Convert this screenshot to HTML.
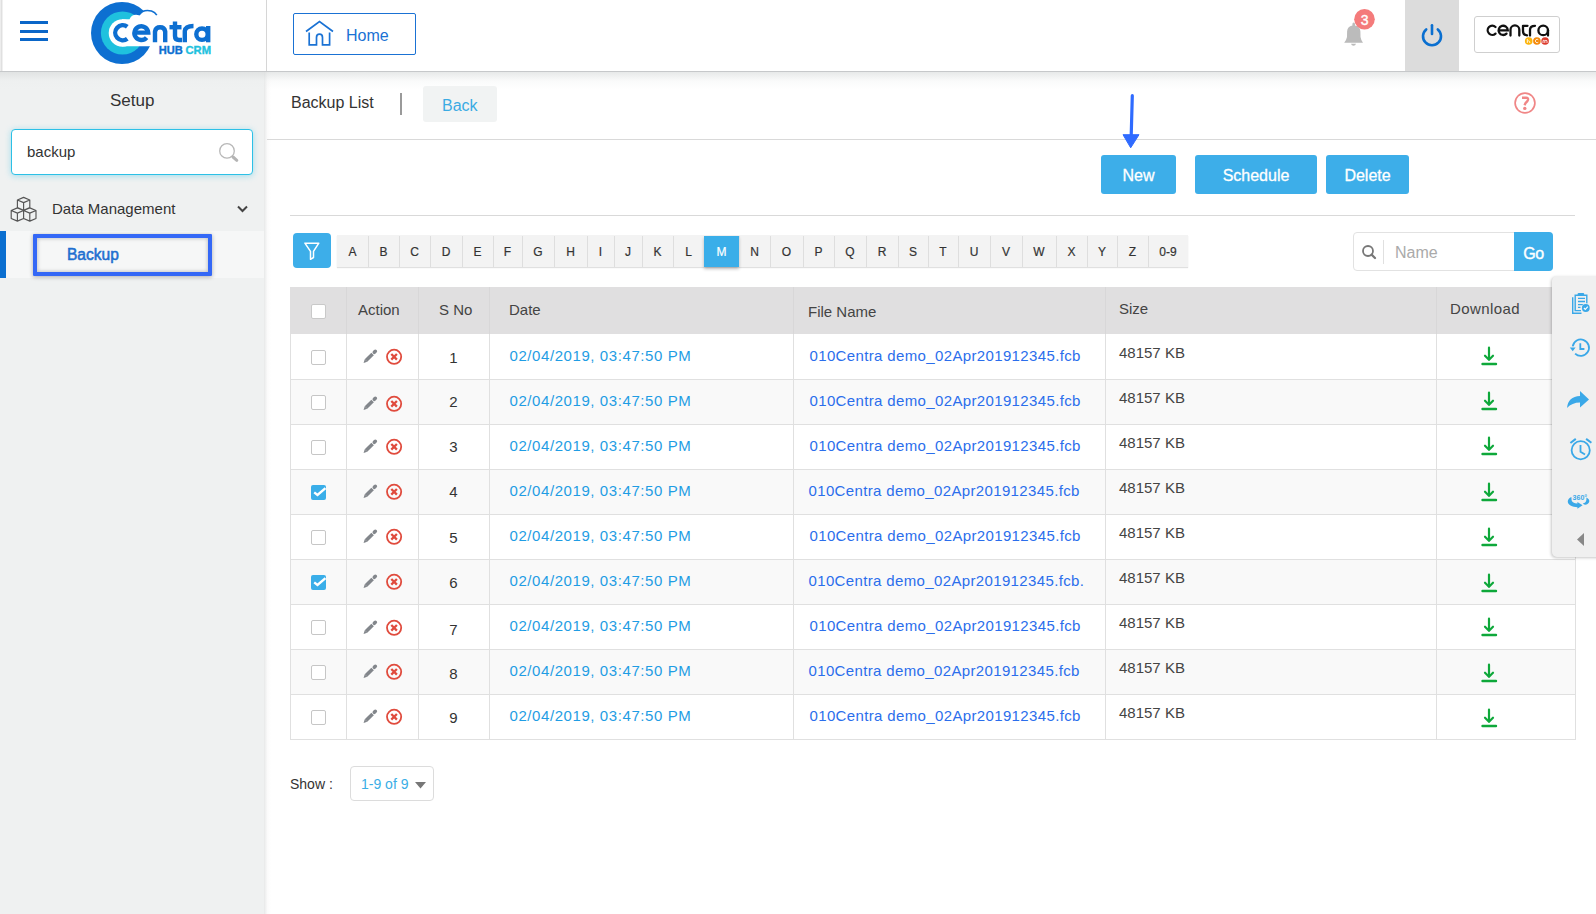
<!DOCTYPE html>
<html><head><meta charset="utf-8">
<style>
*{margin:0;padding:0;box-sizing:border-box}
html,body{width:1596px;height:914px;overflow:hidden;background:#fff;font-family:"Liberation Sans",sans-serif;color:#333}
.a{position:absolute}
.t{position:absolute;white-space:nowrap}
#hdr{position:absolute;left:0;top:0;width:1596px;height:72px;background:#fff;border-bottom:1px solid #c6c8ca}
#side{position:absolute;left:0;top:72px;width:265px;height:842px;background:#eff1f1}
</style></head>
<body>
<!-- sidebar -->
<div id="side"></div>
<div class="a" style="left:264px;top:72px;width:7px;height:842px;background:linear-gradient(to right,#e8e9e9,rgba(250,250,250,0.8) 50%,rgba(255,255,255,0))"></div>
<!-- header shadow -->
<div class="a" style="left:0;top:72px;width:1596px;height:18px;background:linear-gradient(to bottom,rgba(215,218,218,0.6),rgba(235,237,237,0.25) 50%,rgba(255,255,255,0))"></div>

<!-- header -->
<div id="hdr"></div>
<div class="a" style="left:0;top:0;width:3px;height:71px;background:linear-gradient(to right,#f4f4f4,#e0e0e0 50%,#f8f8f8)"></div>
<div class="a" style="left:266px;top:0;width:1px;height:71px;background:#d6d6d6"></div>
<!-- hamburger -->
<div class="a" style="left:20px;top:21px;width:28px;height:3px;background:#0a66c8"></div>
<div class="a" style="left:20px;top:29.5px;width:28px;height:3px;background:#0a66c8"></div>
<div class="a" style="left:20px;top:38px;width:28px;height:3px;background:#0a66c8"></div>

<!-- logo -->
<svg class="a" style="left:0;top:0" width="230" height="70" viewBox="0 0 230 70">
<circle cx="122" cy="33" r="31" fill="#0d6fd1"/>
<circle cx="122.5" cy="33" r="21.6" fill="#1fc1de"/>
<circle cx="122.5" cy="33" r="13.8" fill="#fff"/>
<path d="M122 19.3 L129.5 19.3 Q132 13.5 139 15.2 Q143 8.8 151.5 11 Q155 12 157 16 L225 16 L225 46.2 L158 46 Q153 46 149 46.2 L122 46.2 Z" fill="#fff"/>
<path d="M139 15.2 Q143 8.8 151.5 11 Q155 12.3 156.8 15.2" fill="none" stroke="#0d6fd1" stroke-width="1.6"/>
<g fill="none" stroke="#0d6fd1" stroke-width="4.4" stroke-linecap="butt">
<path d="M127.3 26.8 A7.5 7.5 0 1 0 127.3 38.7"/>
<path d="M134.6 32.6 L148.2 32.6 A6.9 6.9 0 1 0 146.6 37.6"/>
<path d="M155 42.3 L155 31.5 A5.2 5.2 0 0 1 165.2 31.5 L165.2 42.3"/>
<path d="M175 21.5 L175 36 Q175 40 179 40 L182 40"/>
<path d="M169.5 27.2 L181.5 27.2"/>
<path d="M184.8 42.3 L184.8 31 Q185.5 26 193.5 26"/>
<path d="M208.2 26 L208.2 42.3"/>
<circle cx="202" cy="34.2" r="5.7"/>
</g>
<text x="158.7" y="53.7" font-family="Liberation Sans" font-weight="bold" font-size="10.2" fill="#0d6fd1" stroke="#0d6fd1" stroke-width="0.35" textLength="24" lengthAdjust="spacingAndGlyphs">HUB</text>
<text x="185.5" y="53.7" font-family="Liberation Sans" font-weight="bold" font-size="10.2" fill="#1fc1de" stroke="#1fc1de" stroke-width="0.35" textLength="25.5" lengthAdjust="spacingAndGlyphs">CRM</text>
</svg>
<!-- home button -->
<div class="a" style="left:293px;top:13px;width:123px;height:42px;border:1.5px solid #1a72d4;border-radius:2px"></div>
<svg class="a" style="left:300px;top:15px" width="40" height="36" viewBox="300 15 40 36">
<path d="M306 31.5 L319.5 21.5 L333 31.5" fill="none" stroke="#1a72d4" stroke-width="1.7"/>
<path d="M309.2 32.5 L309.2 44.8 L316.5 44.8 L316.5 37.5 Q316.5 34.2 319.5 34.2 Q322.5 34.2 322.5 37.5 L322.5 44.8 L329.6 44.8 L329.6 32.5" fill="none" stroke="#1a72d4" stroke-width="1.7"/>
</svg>
<div class="t" style="left:346px;top:27px;font-size:16px;line-height:18px;color:#1a72d4">Home</div>
<!-- bell -->
<svg class="a" style="left:1340px;top:8px" width="40" height="42" viewBox="1340 8 40 42">
<path d="M1353.7 22.6 Q1355 22.6 1355 24.3 L1355 25.6 Q1360.2 26.8 1360.4 31.5 L1360.5 37 Q1361 40.2 1363 42.8 L1344.2 42.8 Q1346.4 40.2 1347 37 L1347.1 31.5 Q1347.3 26.8 1352.4 25.6 L1352.4 24.3 Q1352.4 22.6 1353.7 22.6 Z" fill="#bbbbbb"/>
<path d="M1351 43.8 L1356 43.8 Q1355.5 45.8 1353.5 45.8 Q1351.5 45.8 1351 43.8 Z" fill="#bbbbbb"/>
<circle cx="1364.5" cy="19.3" r="10.3" fill="#f47b7b"/>
</svg>
<div class="t" style="left:1354.7px;top:11.5px;width:20px;text-align:center;font-size:14px;line-height:16px;color:#fff;-webkit-text-stroke:0.4px #fff">3</div>
<!-- power -->
<div class="a" style="left:1405px;top:0;width:54px;height:71px;background:#dcdcdc"></div>
<svg class="a" style="left:1405px;top:0" width="54" height="71" viewBox="1405 0 54 71">
<path d="M1426.2 29.4 A9 9 0 1 0 1437.8 29.4" fill="none" stroke="#0a6fd0" stroke-width="2.6" stroke-linecap="round"/>
<path d="M1432 25.3 L1432 34" fill="none" stroke="#0a6fd0" stroke-width="2.6" stroke-linecap="round"/>
</svg>
<!-- centra box -->
<div class="a" style="left:1474px;top:16px;width:86px;height:37px;border:1px solid #cfcfcf;border-radius:3px;background:#fff"></div>
<svg class="a" style="left:1474px;top:16px" width="86" height="37" viewBox="1474 16 86 37">
<g fill="none" stroke="#111" stroke-width="2.3" stroke-linecap="round">
<path d="M1495.5 27 A4.6 4.6 0 1 0 1495.5 33.6"/>
<path d="M1498.8 30.3 L1507.8 30.3 A4.6 4.6 0 1 0 1506.5 33.6"/>
<path d="M1510.5 35.5 L1510.5 29.8 A4.4 4.4 0 0 1 1519.3 29.8 L1519.3 35.5"/>
<path d="M1523 25.8 L1523 31 Q1523 35 1527 35.3 M1523 25.8 L1527.5 25.8"/>
<path d="M1530 35.5 L1530 30 Q1530 25.8 1535 25.8"/>
<path d="M1548 30.5 L1548 35.5"/>
<circle cx="1543.2" cy="30.4" r="4.8"/>
</g>
<circle cx="1528.7" cy="41" r="3.8" fill="#fcb40a"/>
<circle cx="1536.9" cy="41" r="3.8" fill="#f58a0a"/>
<circle cx="1545.1" cy="41" r="3.8" fill="#dc3a2c"/>
<g fill="none" stroke="#fff" stroke-width="0.8">
<path d="M1527.3 39 L1527.3 43 M1527.3 41.3 Q1529.8 39.8 1529.8 43"/>
<path d="M1538.3 39.8 A1.7 1.7 0 1 0 1538.3 42.2"/>
<path d="M1543 43 L1543 40.5 Q1544.2 39.5 1544.8 41 L1544.8 43 M1544.8 41 Q1546 39.5 1547 40.8 L1547 43"/>
</g>
</svg>

<!-- sidebar content -->
<div class="t" style="left:110px;top:91px;font-size:17px;line-height:20px;color:#333">Setup</div>
<div class="a" style="left:11px;top:129px;width:242px;height:46px;border:1px solid #2cc0e6;border-radius:4px;background:#fff;box-shadow:0 1px 6px rgba(44,192,230,0.4)"></div>
<div class="t" style="left:27px;top:143px;font-size:15px;line-height:18px;color:#333">backup</div>
<svg class="a" style="left:215px;top:140px" width="26" height="26" viewBox="215 140 26 26">
<circle cx="227" cy="150.9" r="7.3" fill="none" stroke="#b8b8b8" stroke-width="1.3"/>
<path d="M233 157 L236.8 160.3" stroke="#b4b4b4" stroke-width="3" stroke-linecap="round"/>
</svg>
<!-- cubes icon -->
<svg class="a" style="left:5px;top:190px" width="40" height="38" viewBox="5 190 40 38"><path d="M23.60 197.40 L29.80 200.00 L29.80 207.60 L23.60 210.20 L17.40 207.60 L17.40 200.00 Z M17.40 200.00 L23.60 202.60 L29.80 200.00 M23.60 202.60 L23.60 210.20 M17.40 207.90 L23.60 210.50 L23.60 218.50 L17.40 221.10 L11.20 218.50 L11.20 210.50 Z M11.20 210.50 L17.40 213.10 L23.60 210.50 M17.40 213.10 L17.40 221.10 M29.80 207.90 L36.00 210.50 L36.00 218.50 L29.80 221.10 L23.60 218.50 L23.60 210.50 Z M23.60 210.50 L29.80 213.10 L36.00 210.50 M29.80 213.10 L29.80 221.10" fill="none" stroke="#555" stroke-width="1.15" stroke-linejoin="round"/></svg>
<div class="t" style="left:52px;top:200px;font-size:15px;line-height:18px;color:#333">Data Management</div>
<svg class="a" style="left:234px;top:202px" width="16" height="14" viewBox="234 202 16 14">
<path d="M238 206.5 L242.5 211 L247 206.5" fill="none" stroke="#444" stroke-width="2"/>
</svg>
<div class="a" style="left:0;top:231px;width:264px;height:47px;background:#f6f7f7"></div>
<div class="a" style="left:0;top:231px;width:6px;height:47px;background:#0b6fd0"></div>
<div class="a" style="left:33px;top:234px;width:179px;height:42px;border:4px solid #3468f6;border-radius:1px;box-shadow:0 1px 4px rgba(0,0,0,0.3), inset 0 0 4px rgba(0,0,0,0.28)"></div>
<div class="t" style="left:67px;top:245.5px;font-size:16px;line-height:18px;color:#1e6fd0;-webkit-text-stroke:0.55px #1e6fd0;transform:scaleX(0.97);transform-origin:0 0">Backup</div>

<!-- page title bar -->
<div class="t" style="left:291px;top:94px;font-size:16px;line-height:18px;color:#333">Backup List</div>
<div class="a" style="left:400px;top:93px;width:2px;height:22px;background:#9a9a9a"></div>
<div class="a" style="left:423px;top:86px;width:74px;height:36px;background:#f1f3f3;border-radius:3px"></div>
<div class="t" style="left:442px;top:97px;font-size:16px;line-height:18px;color:#3aabe3">Back</div>
<svg class="a" style="left:1510px;top:88px" width="30" height="30" viewBox="1510 88 30 30">
<circle cx="1525" cy="103" r="9.9" fill="none" stroke="#f08686" stroke-width="1.7"/>
<path d="M1522 97.7 H1526.2 Q1528.4 97.7 1528 99.7 Q1527.6 101.4 1525.6 103 L1524.5 105.2" fill="none" stroke="#f08686" stroke-width="2.4"/>
<circle cx="1524.8" cy="108.4" r="1.7" fill="#f08686"/>
</svg>
<div class="a" style="left:267px;top:139px;width:1329px;height:1px;background:#d9d9d9"></div>
<!-- arrow -->
<svg class="a" style="left:1115px;top:90px" width="30" height="62" viewBox="1115 90 30 62">
<path d="M1132.3 95.7 L1131.2 136" stroke="#2f6bff" stroke-width="3.2" stroke-linecap="round"/>
<path d="M1123 134.7 L1139 134.7 L1130.7 147.8 Z" fill="#2f6bff" stroke="#2f6bff" stroke-width="1" stroke-linejoin="round"/>
</svg>
<!-- action buttons -->
<div class="a" style="left:1101px;top:155px;width:75px;height:39px;background:#3daee9;border-radius:3px"></div>
<div class="t" style="left:1101px;top:167px;width:75px;text-align:center;font-size:16px;line-height:18px;color:#fff;-webkit-text-stroke:0.3px #fff">New</div>
<div class="a" style="left:1195px;top:155px;width:122px;height:39px;background:#3daee9;border-radius:3px"></div>
<div class="t" style="left:1195px;top:167px;width:122px;text-align:center;font-size:16px;line-height:18px;color:#fff;-webkit-text-stroke:0.3px #fff">Schedule</div>
<div class="a" style="left:1326px;top:155px;width:83px;height:39px;background:#3daee9;border-radius:3px"></div>
<div class="t" style="left:1326px;top:167px;width:83px;text-align:center;font-size:16px;line-height:18px;color:#fff;-webkit-text-stroke:0.3px #fff">Delete</div>
<div class="a" style="left:290px;top:215px;width:1285px;height:1px;background:#d9d9d9"></div>
<!-- filter -->
<div class="a" style="left:293px;top:233px;width:38px;height:35px;background:#3daee9;border-radius:4px"></div>
<svg class="a" style="left:300px;top:238px" width="24" height="26" viewBox="300 238 24 26"><path d="M304.9 243.2 L318.8 243.2 L313.5 251.4 L313.5 257.5 L310.5 259.3 L310.5 251.4 Z" fill="none" stroke="#fff" stroke-width="1.5" stroke-linejoin="round"/></svg>
<div class="a" style="left:337px;top:235px;width:851px;height:32px;background:#f3f3f3;box-shadow:0 1px 1px rgba(0,0,0,0.12)"></div>
<div class="t" style="left:337px;top:244.5px;width:31px;text-align:center;font-size:12px;line-height:14px;color:#333;-webkit-text-stroke:0.2px #333">A</div>
<div class="a" style="left:368px;top:236px;width:1px;height:31px;background:#dedede"></div>
<div class="t" style="left:368px;top:244.5px;width:31px;text-align:center;font-size:12px;line-height:14px;color:#333;-webkit-text-stroke:0.2px #333">B</div>
<div class="a" style="left:399px;top:236px;width:1px;height:31px;background:#dedede"></div>
<div class="t" style="left:399px;top:244.5px;width:31px;text-align:center;font-size:12px;line-height:14px;color:#333;-webkit-text-stroke:0.2px #333">C</div>
<div class="a" style="left:430px;top:236px;width:1px;height:31px;background:#dedede"></div>
<div class="t" style="left:430px;top:244.5px;width:32px;text-align:center;font-size:12px;line-height:14px;color:#333;-webkit-text-stroke:0.2px #333">D</div>
<div class="a" style="left:462px;top:236px;width:1px;height:31px;background:#dedede"></div>
<div class="t" style="left:462px;top:244.5px;width:31px;text-align:center;font-size:12px;line-height:14px;color:#333;-webkit-text-stroke:0.2px #333">E</div>
<div class="a" style="left:493px;top:236px;width:1px;height:31px;background:#dedede"></div>
<div class="t" style="left:493px;top:244.5px;width:29px;text-align:center;font-size:12px;line-height:14px;color:#333;-webkit-text-stroke:0.2px #333">F</div>
<div class="a" style="left:522px;top:236px;width:1px;height:31px;background:#dedede"></div>
<div class="t" style="left:522px;top:244.5px;width:32px;text-align:center;font-size:12px;line-height:14px;color:#333;-webkit-text-stroke:0.2px #333">G</div>
<div class="a" style="left:554px;top:236px;width:1px;height:31px;background:#dedede"></div>
<div class="t" style="left:554px;top:244.5px;width:33px;text-align:center;font-size:12px;line-height:14px;color:#333;-webkit-text-stroke:0.2px #333">H</div>
<div class="a" style="left:587px;top:236px;width:1px;height:31px;background:#dedede"></div>
<div class="t" style="left:587px;top:244.5px;width:27px;text-align:center;font-size:12px;line-height:14px;color:#333;-webkit-text-stroke:0.2px #333">I</div>
<div class="a" style="left:614px;top:236px;width:1px;height:31px;background:#dedede"></div>
<div class="t" style="left:614px;top:244.5px;width:28px;text-align:center;font-size:12px;line-height:14px;color:#333;-webkit-text-stroke:0.2px #333">J</div>
<div class="a" style="left:642px;top:236px;width:1px;height:31px;background:#dedede"></div>
<div class="t" style="left:642px;top:244.5px;width:31px;text-align:center;font-size:12px;line-height:14px;color:#333;-webkit-text-stroke:0.2px #333">K</div>
<div class="a" style="left:673px;top:236px;width:1px;height:31px;background:#dedede"></div>
<div class="t" style="left:673px;top:244.5px;width:31px;text-align:center;font-size:12px;line-height:14px;color:#333;-webkit-text-stroke:0.2px #333">L</div>
<div class="a" style="left:704px;top:236px;width:35px;height:31px;background:#3aaee9;box-shadow:0 2px 3px rgba(0,0,0,0.25)"></div>
<div class="t" style="left:704px;top:244.5px;width:35px;text-align:center;font-size:12px;line-height:14px;color:#fff;-webkit-text-stroke:0.2px #fff">M</div>
<div class="a" style="left:739px;top:236px;width:1px;height:31px;background:#dedede"></div>
<div class="t" style="left:739px;top:244.5px;width:31px;text-align:center;font-size:12px;line-height:14px;color:#333;-webkit-text-stroke:0.2px #333">N</div>
<div class="a" style="left:770px;top:236px;width:1px;height:31px;background:#dedede"></div>
<div class="t" style="left:770px;top:244.5px;width:33px;text-align:center;font-size:12px;line-height:14px;color:#333;-webkit-text-stroke:0.2px #333">O</div>
<div class="a" style="left:803px;top:236px;width:1px;height:31px;background:#dedede"></div>
<div class="t" style="left:803px;top:244.5px;width:31px;text-align:center;font-size:12px;line-height:14px;color:#333;-webkit-text-stroke:0.2px #333">P</div>
<div class="a" style="left:834px;top:236px;width:1px;height:31px;background:#dedede"></div>
<div class="t" style="left:834px;top:244.5px;width:32px;text-align:center;font-size:12px;line-height:14px;color:#333;-webkit-text-stroke:0.2px #333">Q</div>
<div class="a" style="left:866px;top:236px;width:1px;height:31px;background:#dedede"></div>
<div class="t" style="left:866px;top:244.5px;width:32px;text-align:center;font-size:12px;line-height:14px;color:#333;-webkit-text-stroke:0.2px #333">R</div>
<div class="a" style="left:898px;top:236px;width:1px;height:31px;background:#dedede"></div>
<div class="t" style="left:898px;top:244.5px;width:30px;text-align:center;font-size:12px;line-height:14px;color:#333;-webkit-text-stroke:0.2px #333">S</div>
<div class="a" style="left:928px;top:236px;width:1px;height:31px;background:#dedede"></div>
<div class="t" style="left:928px;top:244.5px;width:30px;text-align:center;font-size:12px;line-height:14px;color:#333;-webkit-text-stroke:0.2px #333">T</div>
<div class="a" style="left:958px;top:236px;width:1px;height:31px;background:#dedede"></div>
<div class="t" style="left:958px;top:244.5px;width:32px;text-align:center;font-size:12px;line-height:14px;color:#333;-webkit-text-stroke:0.2px #333">U</div>
<div class="a" style="left:990px;top:236px;width:1px;height:31px;background:#dedede"></div>
<div class="t" style="left:990px;top:244.5px;width:32px;text-align:center;font-size:12px;line-height:14px;color:#333;-webkit-text-stroke:0.2px #333">V</div>
<div class="a" style="left:1022px;top:236px;width:1px;height:31px;background:#dedede"></div>
<div class="t" style="left:1022px;top:244.5px;width:34px;text-align:center;font-size:12px;line-height:14px;color:#333;-webkit-text-stroke:0.2px #333">W</div>
<div class="a" style="left:1056px;top:236px;width:1px;height:31px;background:#dedede"></div>
<div class="t" style="left:1056px;top:244.5px;width:31px;text-align:center;font-size:12px;line-height:14px;color:#333;-webkit-text-stroke:0.2px #333">X</div>
<div class="a" style="left:1087px;top:236px;width:1px;height:31px;background:#dedede"></div>
<div class="t" style="left:1087px;top:244.5px;width:30px;text-align:center;font-size:12px;line-height:14px;color:#333;-webkit-text-stroke:0.2px #333">Y</div>
<div class="a" style="left:1117px;top:236px;width:1px;height:31px;background:#dedede"></div>
<div class="t" style="left:1117px;top:244.5px;width:31px;text-align:center;font-size:12px;line-height:14px;color:#333;-webkit-text-stroke:0.2px #333">Z</div>
<div class="a" style="left:1148px;top:236px;width:1px;height:31px;background:#dedede"></div>
<div class="t" style="left:1148px;top:244.5px;width:40px;text-align:center;font-size:12px;line-height:14px;color:#333;-webkit-text-stroke:0.2px #333">0-9</div>
<!-- name search -->
<div class="a" style="left:1353px;top:232px;width:200px;height:39px;border:1px solid #e2e2e2;border-radius:4px;background:#fff"></div>
<svg class="a" style="left:1360px;top:243px" width="18" height="18" viewBox="1360 243 18 18"><circle cx="1368" cy="251" r="5" fill="none" stroke="#777" stroke-width="1.8"/><path d="M1371.6 254.6 L1375 258" stroke="#777" stroke-width="2.2" stroke-linecap="round"/></svg>
<div class="a" style="left:1383px;top:240px;width:1px;height:24px;background:#e0e0e0"></div>
<div class="t" style="left:1395px;top:244px;font-size:16px;line-height:18px;color:#aaa">Name</div>
<div class="a" style="left:1514px;top:232px;width:39px;height:39px;background:#3daee9;border-radius:0 4px 4px 0"></div>
<div class="t" style="left:1514px;top:244.5px;width:39px;text-align:center;font-size:16px;line-height:18px;color:#fff;-webkit-text-stroke:0.4px #fff;letter-spacing:-0.5px">Go</div>
<!-- table -->
<div class="a" style="left:290px;top:287px;width:1286px;height:47px;background:#e0dfe0"></div>
<div class="a" style="left:346px;top:287px;width:1px;height:47px;background:#d8d7d8"></div>
<div class="a" style="left:418px;top:287px;width:1px;height:47px;background:#d8d7d8"></div>
<div class="a" style="left:489px;top:287px;width:1px;height:47px;background:#d8d7d8"></div>
<div class="a" style="left:793px;top:287px;width:1px;height:47px;background:#d8d7d8"></div>
<div class="a" style="left:1105px;top:287px;width:1px;height:47px;background:#d8d7d8"></div>
<div class="a" style="left:1436px;top:287px;width:1px;height:47px;background:#d8d7d8"></div>
<div class="a" style="left:290px;top:334px;width:1286px;height:45px;background:#ffffff"></div>
<div class="a" style="left:290px;top:379px;width:1286px;height:45px;background:#f9f9f9"></div>
<div class="a" style="left:290px;top:424px;width:1286px;height:45px;background:#ffffff"></div>
<div class="a" style="left:290px;top:469px;width:1286px;height:45px;background:#f9f9f9"></div>
<div class="a" style="left:290px;top:514px;width:1286px;height:45px;background:#ffffff"></div>
<div class="a" style="left:290px;top:559px;width:1286px;height:45px;background:#f9f9f9"></div>
<div class="a" style="left:290px;top:604px;width:1286px;height:45px;background:#ffffff"></div>
<div class="a" style="left:290px;top:649px;width:1286px;height:45px;background:#f9f9f9"></div>
<div class="a" style="left:290px;top:694px;width:1286px;height:45px;background:#ffffff"></div>
<div class="a" style="left:290px;top:334px;width:1px;height:406px;background:#e0e0e0"></div>
<div class="a" style="left:1575px;top:334px;width:1px;height:406px;background:#e0e0e0"></div>
<div class="a" style="left:346px;top:334px;width:1px;height:406px;background:#e0e0e0"></div>
<div class="a" style="left:418px;top:334px;width:1px;height:406px;background:#e0e0e0"></div>
<div class="a" style="left:489px;top:334px;width:1px;height:406px;background:#e0e0e0"></div>
<div class="a" style="left:793px;top:334px;width:1px;height:406px;background:#e0e0e0"></div>
<div class="a" style="left:1105px;top:334px;width:1px;height:406px;background:#e0e0e0"></div>
<div class="a" style="left:1436px;top:334px;width:1px;height:406px;background:#e0e0e0"></div>
<div class="a" style="left:290px;top:379px;width:1286px;height:1px;background:#e0e0e0"></div>
<div class="a" style="left:290px;top:424px;width:1286px;height:1px;background:#e0e0e0"></div>
<div class="a" style="left:290px;top:469px;width:1286px;height:1px;background:#e0e0e0"></div>
<div class="a" style="left:290px;top:514px;width:1286px;height:1px;background:#e0e0e0"></div>
<div class="a" style="left:290px;top:559px;width:1286px;height:1px;background:#e0e0e0"></div>
<div class="a" style="left:290px;top:604px;width:1286px;height:1px;background:#e0e0e0"></div>
<div class="a" style="left:290px;top:649px;width:1286px;height:1px;background:#e0e0e0"></div>
<div class="a" style="left:290px;top:694px;width:1286px;height:1px;background:#e0e0e0"></div>
<div class="a" style="left:290px;top:739px;width:1286px;height:1px;background:#e0e0e0"></div>
<div class="a" style="left:311px;top:304px;width:15px;height:15px;background:#fff;border:1px solid #c9c9c9;border-radius:2px"></div>
<div class="t" style="left:358px;top:301px;font-size:15px;line-height:17px;color:#444">Action</div>
<div class="t" style="left:439px;top:301px;font-size:15px;line-height:17px;color:#444">S No</div>
<div class="t" style="left:509px;top:301px;font-size:15px;line-height:17px;color:#444">Date</div>
<div class="t" style="left:808px;top:303px;font-size:15px;line-height:17px;color:#444">File Name</div>
<div class="t" style="left:1119px;top:300px;font-size:15px;line-height:17px;color:#444">Size</div>
<div class="t" style="left:1450px;top:300px;font-size:15px;line-height:17px;color:#444;letter-spacing:0.4px">Download</div>
<div class="a" style="left:311px;top:350px;width:15px;height:15px;background:#fff;border:1px solid #c6c6c6;border-radius:2px"></div>
<svg class="a" style="left:360px;top:346px" width="44" height="22" viewBox="360 0 44 22">
<path d="M366 14.6 L372.6 8" stroke="#82868b" stroke-width="3.6"/>
<path d="M374.3 6.3 L375.3 5.3" stroke="#82868b" stroke-width="3.6" stroke-linecap="round"/>
<path d="M364.73 13.33 L367.27 15.87 L363.6 17 Z" fill="#82868b"/>
<circle cx="394.1" cy="10.8" r="7.1" fill="none" stroke="#e04b3d" stroke-width="1.8"/>
<path d="M391.3 8 L396.9 13.6 M396.9 8 L391.3 13.6" stroke="#e04b3d" stroke-width="2.3"/>
</svg>
<div class="t" style="left:418px;top:349px;width:71px;text-align:center;font-size:15px;line-height:17px;color:#333">1</div>
<div class="t" style="left:509.5px;top:347px;font-size:15px;line-height:17px;letter-spacing:0.58px;color:#1f9de4">02/04/2019, 03:47:50 PM</div>
<div class="t" style="left:809.5px;top:347px;font-size:15px;line-height:17px;letter-spacing:0.36px;color:#2b6eec">010Centra demo_02Apr201912345.fcb</div>
<div class="t" style="left:1119px;top:344px;font-size:15px;line-height:17px;color:#444">48157 KB</div>
<svg class="a" style="left:1478px;top:343px" width="22" height="26" viewBox="1478 0 22 26">
<path d="M1489 4.7 L1489 16.5" stroke="#0ea83a" stroke-width="2.2" stroke-linecap="round"/>
<path d="M1485 12.7 L1489 16.7 L1493 12.7" fill="none" stroke="#0ea83a" stroke-width="2.2" stroke-linecap="round" stroke-linejoin="round"/>
<path d="M1482.5 21 L1496 21" stroke="#0ea83a" stroke-width="2.4" stroke-linecap="round"/>
</svg>
<div class="a" style="left:311px;top:395px;width:15px;height:15px;background:#fff;border:1px solid #c6c6c6;border-radius:2px"></div>
<svg class="a" style="left:360px;top:393px" width="44" height="22" viewBox="360 0 44 22">
<path d="M366 14.6 L372.6 8" stroke="#82868b" stroke-width="3.6"/>
<path d="M374.3 6.3 L375.3 5.3" stroke="#82868b" stroke-width="3.6" stroke-linecap="round"/>
<path d="M364.73 13.33 L367.27 15.87 L363.6 17 Z" fill="#82868b"/>
<circle cx="394.1" cy="10.8" r="7.1" fill="none" stroke="#e04b3d" stroke-width="1.8"/>
<path d="M391.3 8 L396.9 13.6 M396.9 8 L391.3 13.6" stroke="#e04b3d" stroke-width="2.3"/>
</svg>
<div class="t" style="left:418px;top:392.5px;width:71px;text-align:center;font-size:15px;line-height:17px;color:#333">2</div>
<div class="t" style="left:509.5px;top:392px;font-size:15px;line-height:17px;letter-spacing:0.58px;color:#1f9de4">02/04/2019, 03:47:50 PM</div>
<div class="t" style="left:809.5px;top:392px;font-size:15px;line-height:17px;letter-spacing:0.36px;color:#2b6eec">010Centra demo_02Apr201912345.fcb</div>
<div class="t" style="left:1119px;top:389px;font-size:15px;line-height:17px;color:#444">48157 KB</div>
<svg class="a" style="left:1478px;top:388px" width="22" height="26" viewBox="1478 0 22 26">
<path d="M1489 4.7 L1489 16.5" stroke="#0ea83a" stroke-width="2.2" stroke-linecap="round"/>
<path d="M1485 12.7 L1489 16.7 L1493 12.7" fill="none" stroke="#0ea83a" stroke-width="2.2" stroke-linecap="round" stroke-linejoin="round"/>
<path d="M1482.5 21 L1496 21" stroke="#0ea83a" stroke-width="2.4" stroke-linecap="round"/>
</svg>
<div class="a" style="left:311px;top:440px;width:15px;height:15px;background:#fff;border:1px solid #c6c6c6;border-radius:2px"></div>
<svg class="a" style="left:360px;top:436px" width="44" height="22" viewBox="360 0 44 22">
<path d="M366 14.6 L372.6 8" stroke="#82868b" stroke-width="3.6"/>
<path d="M374.3 6.3 L375.3 5.3" stroke="#82868b" stroke-width="3.6" stroke-linecap="round"/>
<path d="M364.73 13.33 L367.27 15.87 L363.6 17 Z" fill="#82868b"/>
<circle cx="394.1" cy="10.8" r="7.1" fill="none" stroke="#e04b3d" stroke-width="1.8"/>
<path d="M391.3 8 L396.9 13.6 M396.9 8 L391.3 13.6" stroke="#e04b3d" stroke-width="2.3"/>
</svg>
<div class="t" style="left:418px;top:438px;width:71px;text-align:center;font-size:15px;line-height:17px;color:#333">3</div>
<div class="t" style="left:509.5px;top:437px;font-size:15px;line-height:17px;letter-spacing:0.58px;color:#1f9de4">02/04/2019, 03:47:50 PM</div>
<div class="t" style="left:809.5px;top:437px;font-size:15px;line-height:17px;letter-spacing:0.36px;color:#2b6eec">010Centra demo_02Apr201912345.fcb</div>
<div class="t" style="left:1119px;top:434px;font-size:15px;line-height:17px;color:#444">48157 KB</div>
<svg class="a" style="left:1478px;top:433px" width="22" height="26" viewBox="1478 0 22 26">
<path d="M1489 4.7 L1489 16.5" stroke="#0ea83a" stroke-width="2.2" stroke-linecap="round"/>
<path d="M1485 12.7 L1489 16.7 L1493 12.7" fill="none" stroke="#0ea83a" stroke-width="2.2" stroke-linecap="round" stroke-linejoin="round"/>
<path d="M1482.5 21 L1496 21" stroke="#0ea83a" stroke-width="2.4" stroke-linecap="round"/>
</svg>
<div class="a" style="left:311px;top:485px;width:15px;height:15px;background:#3aaee9;border-radius:2px"></div>
<svg class="a" style="left:311px;top:485px" width="15" height="15" viewBox="0 0 15 15"><path d="M3.2 7.4 L6.5 10 L14.5 3.2" fill="none" stroke="#fff" stroke-width="2.4"/></svg>
<svg class="a" style="left:360px;top:481px" width="44" height="22" viewBox="360 0 44 22">
<path d="M366 14.6 L372.6 8" stroke="#82868b" stroke-width="3.6"/>
<path d="M374.3 6.3 L375.3 5.3" stroke="#82868b" stroke-width="3.6" stroke-linecap="round"/>
<path d="M364.73 13.33 L367.27 15.87 L363.6 17 Z" fill="#82868b"/>
<circle cx="394.1" cy="10.8" r="7.1" fill="none" stroke="#e04b3d" stroke-width="1.8"/>
<path d="M391.3 8 L396.9 13.6 M396.9 8 L391.3 13.6" stroke="#e04b3d" stroke-width="2.3"/>
</svg>
<div class="t" style="left:418px;top:482.5px;width:71px;text-align:center;font-size:15px;line-height:17px;color:#333">4</div>
<div class="t" style="left:509.5px;top:482px;font-size:15px;line-height:17px;letter-spacing:0.58px;color:#1f9de4">02/04/2019, 03:47:50 PM</div>
<div class="t" style="left:808.5px;top:482px;font-size:15px;line-height:17px;letter-spacing:0.36px;color:#2b6eec">010Centra demo_02Apr201912345.fcb</div>
<div class="t" style="left:1119px;top:479px;font-size:15px;line-height:17px;color:#444">48157 KB</div>
<svg class="a" style="left:1478px;top:479px" width="22" height="26" viewBox="1478 0 22 26">
<path d="M1489 4.7 L1489 16.5" stroke="#0ea83a" stroke-width="2.2" stroke-linecap="round"/>
<path d="M1485 12.7 L1489 16.7 L1493 12.7" fill="none" stroke="#0ea83a" stroke-width="2.2" stroke-linecap="round" stroke-linejoin="round"/>
<path d="M1482.5 21 L1496 21" stroke="#0ea83a" stroke-width="2.4" stroke-linecap="round"/>
</svg>
<div class="a" style="left:311px;top:530px;width:15px;height:15px;background:#fff;border:1px solid #c6c6c6;border-radius:2px"></div>
<svg class="a" style="left:360px;top:526px" width="44" height="22" viewBox="360 0 44 22">
<path d="M366 14.6 L372.6 8" stroke="#82868b" stroke-width="3.6"/>
<path d="M374.3 6.3 L375.3 5.3" stroke="#82868b" stroke-width="3.6" stroke-linecap="round"/>
<path d="M364.73 13.33 L367.27 15.87 L363.6 17 Z" fill="#82868b"/>
<circle cx="394.1" cy="10.8" r="7.1" fill="none" stroke="#e04b3d" stroke-width="1.8"/>
<path d="M391.3 8 L396.9 13.6 M396.9 8 L391.3 13.6" stroke="#e04b3d" stroke-width="2.3"/>
</svg>
<div class="t" style="left:418px;top:529px;width:71px;text-align:center;font-size:15px;line-height:17px;color:#333">5</div>
<div class="t" style="left:509.5px;top:527px;font-size:15px;line-height:17px;letter-spacing:0.58px;color:#1f9de4">02/04/2019, 03:47:50 PM</div>
<div class="t" style="left:809.5px;top:527px;font-size:15px;line-height:17px;letter-spacing:0.36px;color:#2b6eec">010Centra demo_02Apr201912345.fcb</div>
<div class="t" style="left:1119px;top:524px;font-size:15px;line-height:17px;color:#444">48157 KB</div>
<svg class="a" style="left:1478px;top:524px" width="22" height="26" viewBox="1478 0 22 26">
<path d="M1489 4.7 L1489 16.5" stroke="#0ea83a" stroke-width="2.2" stroke-linecap="round"/>
<path d="M1485 12.7 L1489 16.7 L1493 12.7" fill="none" stroke="#0ea83a" stroke-width="2.2" stroke-linecap="round" stroke-linejoin="round"/>
<path d="M1482.5 21 L1496 21" stroke="#0ea83a" stroke-width="2.4" stroke-linecap="round"/>
</svg>
<div class="a" style="left:311px;top:575px;width:15px;height:15px;background:#3aaee9;border-radius:2px"></div>
<svg class="a" style="left:311px;top:575px" width="15" height="15" viewBox="0 0 15 15"><path d="M3.2 7.4 L6.5 10 L14.5 3.2" fill="none" stroke="#fff" stroke-width="2.4"/></svg>
<svg class="a" style="left:360px;top:571px" width="44" height="22" viewBox="360 0 44 22">
<path d="M366 14.6 L372.6 8" stroke="#82868b" stroke-width="3.6"/>
<path d="M374.3 6.3 L375.3 5.3" stroke="#82868b" stroke-width="3.6" stroke-linecap="round"/>
<path d="M364.73 13.33 L367.27 15.87 L363.6 17 Z" fill="#82868b"/>
<circle cx="394.1" cy="10.8" r="7.1" fill="none" stroke="#e04b3d" stroke-width="1.8"/>
<path d="M391.3 8 L396.9 13.6 M396.9 8 L391.3 13.6" stroke="#e04b3d" stroke-width="2.3"/>
</svg>
<div class="t" style="left:418px;top:574px;width:71px;text-align:center;font-size:15px;line-height:17px;color:#333">6</div>
<div class="t" style="left:509.5px;top:572px;font-size:15px;line-height:17px;letter-spacing:0.58px;color:#1f9de4">02/04/2019, 03:47:50 PM</div>
<div class="t" style="left:808.5px;top:572px;font-size:15px;line-height:17px;letter-spacing:0.36px;color:#2b6eec">010Centra demo_02Apr201912345.fcb.</div>
<div class="t" style="left:1119px;top:569px;font-size:15px;line-height:17px;color:#444">48157 KB</div>
<svg class="a" style="left:1478px;top:570px" width="22" height="26" viewBox="1478 0 22 26">
<path d="M1489 4.7 L1489 16.5" stroke="#0ea83a" stroke-width="2.2" stroke-linecap="round"/>
<path d="M1485 12.7 L1489 16.7 L1493 12.7" fill="none" stroke="#0ea83a" stroke-width="2.2" stroke-linecap="round" stroke-linejoin="round"/>
<path d="M1482.5 21 L1496 21" stroke="#0ea83a" stroke-width="2.4" stroke-linecap="round"/>
</svg>
<div class="a" style="left:311px;top:620px;width:15px;height:15px;background:#fff;border:1px solid #c6c6c6;border-radius:2px"></div>
<svg class="a" style="left:360px;top:617px" width="44" height="22" viewBox="360 0 44 22">
<path d="M366 14.6 L372.6 8" stroke="#82868b" stroke-width="3.6"/>
<path d="M374.3 6.3 L375.3 5.3" stroke="#82868b" stroke-width="3.6" stroke-linecap="round"/>
<path d="M364.73 13.33 L367.27 15.87 L363.6 17 Z" fill="#82868b"/>
<circle cx="394.1" cy="10.8" r="7.1" fill="none" stroke="#e04b3d" stroke-width="1.8"/>
<path d="M391.3 8 L396.9 13.6 M396.9 8 L391.3 13.6" stroke="#e04b3d" stroke-width="2.3"/>
</svg>
<div class="t" style="left:418px;top:620.5px;width:71px;text-align:center;font-size:15px;line-height:17px;color:#333">7</div>
<div class="t" style="left:509.5px;top:617px;font-size:15px;line-height:17px;letter-spacing:0.58px;color:#1f9de4">02/04/2019, 03:47:50 PM</div>
<div class="t" style="left:809.5px;top:617px;font-size:15px;line-height:17px;letter-spacing:0.36px;color:#2b6eec">010Centra demo_02Apr201912345.fcb</div>
<div class="t" style="left:1119px;top:614px;font-size:15px;line-height:17px;color:#444">48157 KB</div>
<svg class="a" style="left:1478px;top:614px" width="22" height="26" viewBox="1478 0 22 26">
<path d="M1489 4.7 L1489 16.5" stroke="#0ea83a" stroke-width="2.2" stroke-linecap="round"/>
<path d="M1485 12.7 L1489 16.7 L1493 12.7" fill="none" stroke="#0ea83a" stroke-width="2.2" stroke-linecap="round" stroke-linejoin="round"/>
<path d="M1482.5 21 L1496 21" stroke="#0ea83a" stroke-width="2.4" stroke-linecap="round"/>
</svg>
<div class="a" style="left:311px;top:665px;width:15px;height:15px;background:#fff;border:1px solid #c6c6c6;border-radius:2px"></div>
<svg class="a" style="left:360px;top:661px" width="44" height="22" viewBox="360 0 44 22">
<path d="M366 14.6 L372.6 8" stroke="#82868b" stroke-width="3.6"/>
<path d="M374.3 6.3 L375.3 5.3" stroke="#82868b" stroke-width="3.6" stroke-linecap="round"/>
<path d="M364.73 13.33 L367.27 15.87 L363.6 17 Z" fill="#82868b"/>
<circle cx="394.1" cy="10.8" r="7.1" fill="none" stroke="#e04b3d" stroke-width="1.8"/>
<path d="M391.3 8 L396.9 13.6 M396.9 8 L391.3 13.6" stroke="#e04b3d" stroke-width="2.3"/>
</svg>
<div class="t" style="left:418px;top:665px;width:71px;text-align:center;font-size:15px;line-height:17px;color:#333">8</div>
<div class="t" style="left:509.5px;top:662px;font-size:15px;line-height:17px;letter-spacing:0.58px;color:#1f9de4">02/04/2019, 03:47:50 PM</div>
<div class="t" style="left:808.5px;top:662px;font-size:15px;line-height:17px;letter-spacing:0.36px;color:#2b6eec">010Centra demo_02Apr201912345.fcb</div>
<div class="t" style="left:1119px;top:659px;font-size:15px;line-height:17px;color:#444">48157 KB</div>
<svg class="a" style="left:1478px;top:660px" width="22" height="26" viewBox="1478 0 22 26">
<path d="M1489 4.7 L1489 16.5" stroke="#0ea83a" stroke-width="2.2" stroke-linecap="round"/>
<path d="M1485 12.7 L1489 16.7 L1493 12.7" fill="none" stroke="#0ea83a" stroke-width="2.2" stroke-linecap="round" stroke-linejoin="round"/>
<path d="M1482.5 21 L1496 21" stroke="#0ea83a" stroke-width="2.4" stroke-linecap="round"/>
</svg>
<div class="a" style="left:311px;top:710px;width:15px;height:15px;background:#fff;border:1px solid #c6c6c6;border-radius:2px"></div>
<svg class="a" style="left:360px;top:706px" width="44" height="22" viewBox="360 0 44 22">
<path d="M366 14.6 L372.6 8" stroke="#82868b" stroke-width="3.6"/>
<path d="M374.3 6.3 L375.3 5.3" stroke="#82868b" stroke-width="3.6" stroke-linecap="round"/>
<path d="M364.73 13.33 L367.27 15.87 L363.6 17 Z" fill="#82868b"/>
<circle cx="394.1" cy="10.8" r="7.1" fill="none" stroke="#e04b3d" stroke-width="1.8"/>
<path d="M391.3 8 L396.9 13.6 M396.9 8 L391.3 13.6" stroke="#e04b3d" stroke-width="2.3"/>
</svg>
<div class="t" style="left:418px;top:709px;width:71px;text-align:center;font-size:15px;line-height:17px;color:#333">9</div>
<div class="t" style="left:509.5px;top:707px;font-size:15px;line-height:17px;letter-spacing:0.58px;color:#1f9de4">02/04/2019, 03:47:50 PM</div>
<div class="t" style="left:809.5px;top:707px;font-size:15px;line-height:17px;letter-spacing:0.36px;color:#2b6eec">010Centra demo_02Apr201912345.fcb</div>
<div class="t" style="left:1119px;top:704px;font-size:15px;line-height:17px;color:#444">48157 KB</div>
<svg class="a" style="left:1478px;top:705px" width="22" height="26" viewBox="1478 0 22 26">
<path d="M1489 4.7 L1489 16.5" stroke="#0ea83a" stroke-width="2.2" stroke-linecap="round"/>
<path d="M1485 12.7 L1489 16.7 L1493 12.7" fill="none" stroke="#0ea83a" stroke-width="2.2" stroke-linecap="round" stroke-linejoin="round"/>
<path d="M1482.5 21 L1496 21" stroke="#0ea83a" stroke-width="2.4" stroke-linecap="round"/>
</svg>
<!-- footer -->
<div class="t" style="left:290px;top:776px;font-size:14px;line-height:16px;color:#333">Show :</div>
<div class="a" style="left:350px;top:766px;width:84px;height:35px;border:1px solid #dcdcdc;border-radius:4px;background:#fff"></div>
<div class="t" style="left:361px;top:776px;font-size:14px;line-height:16px;color:#3aaee6">1-9 of 9</div>
<svg class="a" style="left:412px;top:778px" width="18" height="14" viewBox="412 778 18 14"><path d="M415 782 L426 782 L420.5 788.6 Z" fill="#777"/></svg>
<!-- side panel -->
<div class="a" style="left:1552px;top:276px;width:50px;height:281px;background:#f0f0f0;border-radius:5px 0 0 5px;box-shadow:-1px 1px 3px rgba(0,0,0,0.22)"></div>
<svg class="a" style="left:1552px;top:276px" width="44" height="281" viewBox="1552 276 44 281">
<g fill="none" stroke="#3aa8e8" stroke-width="1.4">
<path d="M1572.7 297.2 L1572.7 313.3 L1581.5 313.3"/>
<path d="M1581 310.6 L1575.2 310.6 L1575.2 295.2 L1586.8 295.2 L1586.8 303.5"/>
</g>
<g fill="none" stroke="#3aa8e8" stroke-width="1.3">
<path d="M1578 298.3 H1585 M1578 301.5 H1585 M1578 304.6 H1583 M1578 307.4 H1580.5"/>
</g>
<rect x="1577.6" y="293" width="6.6" height="2.8" rx="1" fill="#3aa8e8"/>
<circle cx="1585.8" cy="308" r="4.5" fill="#f0f0f0"/>
<circle cx="1585.8" cy="308" r="3.9" fill="#3aa8e8"/>
<path d="M1583.9 308 L1585.3 309.4 L1587.8 306.7" fill="none" stroke="#fff" stroke-width="1.1"/>
<g fill="none" stroke="#3aa8e8" stroke-width="1.8">
<path d="M1572.7 346.3 A8.2 8.2 0 1 1 1575.1 353.6"/>
<path d="M1580.3 343.3 L1580.3 349 L1584.4 349"/>
</g>
<path d="M1569.8 347.6 L1575.6 347.6 L1572.7 351.2 Z" fill="#3aa8e8"/>
<path d="M1567 408 Q1568 396.5 1580 396 L1580 391 L1589 399.5 L1580 407.5 L1580 402.5 Q1572 402.5 1567 408 Z" fill="#3aa8e8"/>
<g fill="none" stroke="#3aa8e8" stroke-width="1.8">
<circle cx="1580.7" cy="450.3" r="9.1"/>
<path d="M1580.5 445 L1580.5 451.8 L1585 454.6"/>
<path d="M1570.4 443 L1575.8 438.9 M1586.1 438.9 L1591.4 442.8" stroke-width="2"/>
</g>
<text x="1572.6" y="499.6" font-family="Liberation Sans" font-weight="bold" font-size="7.6" fill="#3aa8e8" textLength="14.6" lengthAdjust="spacingAndGlyphs">360°</text>
<path d="M1571.4 497 C1567 499 1566.5 503 1570.5 505.5 C1572.5 506.6 1575 507 1577.4 507.2 L1577.4 508.8 L1582.6 505.3 L1577.4 501.9 L1577.4 503.6 C1574 503.2 1572 502 1571.6 500.2 Z" fill="#3aa8e8"/>
<path d="M1586.3 497.5 C1590 499 1590.2 502.5 1587.5 504 C1586 505 1584.5 505 1582.7 503.5 C1585 503.3 1587 501.5 1586.3 497.5 Z" fill="#3aa8e8"/>
<path d="M1584 533 L1584 546 L1577 539.5 Z" fill="#888"/>
</svg>

</body></html>
